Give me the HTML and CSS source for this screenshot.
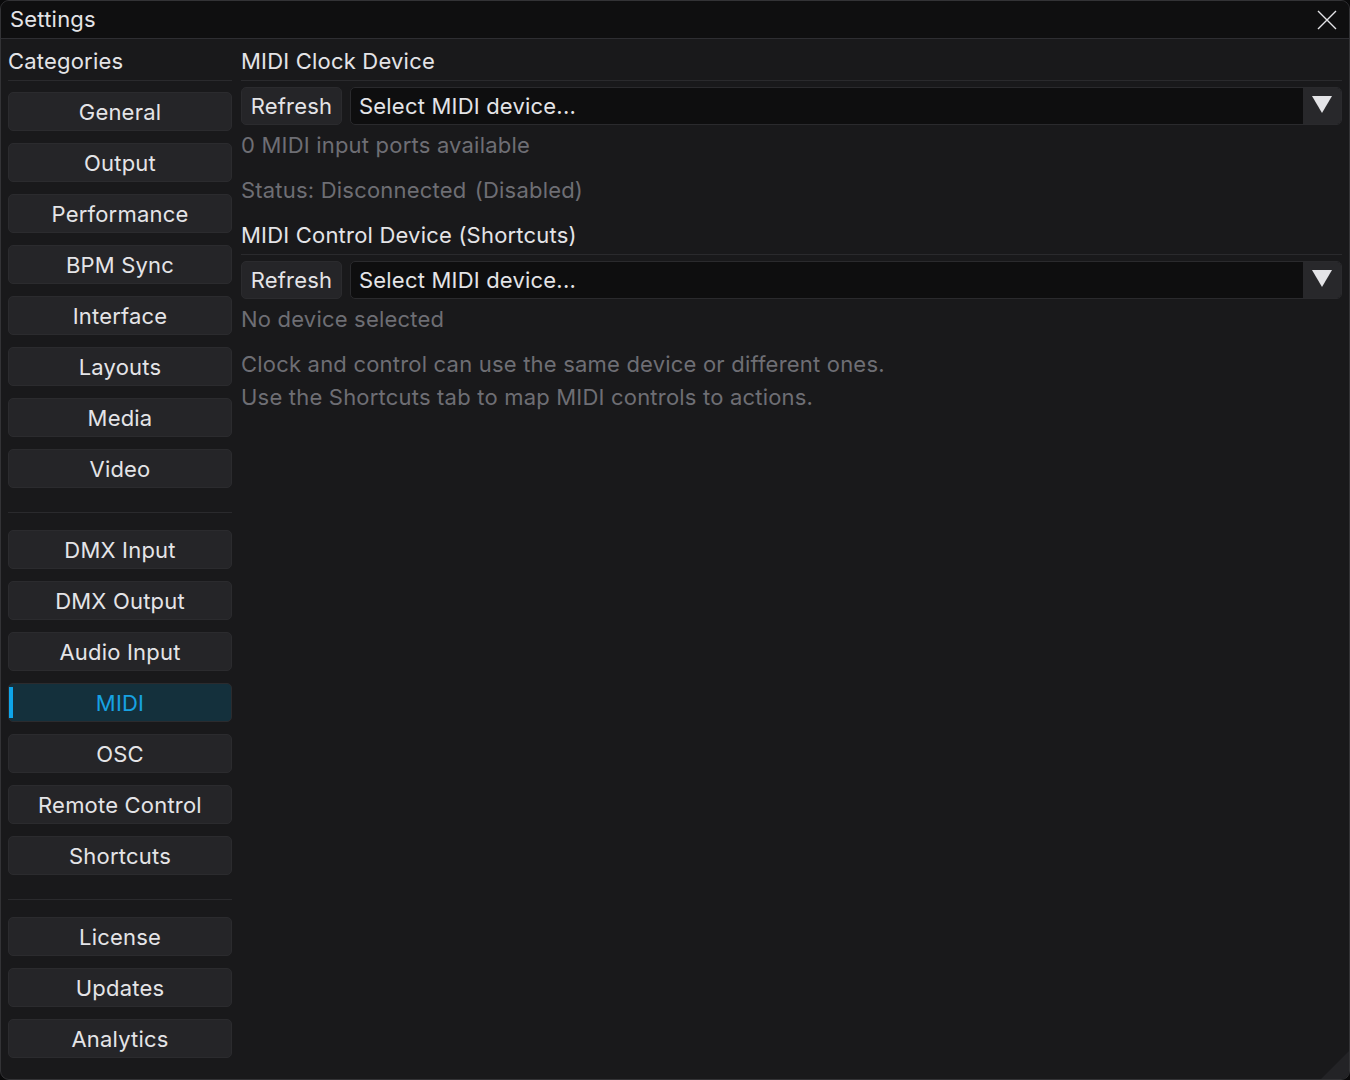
FILE: index.html
```html
<!DOCTYPE html>
<html>
<head>
<meta charset="utf-8">
<link rel="stylesheet" href="styles.css">
</head>
<body>
<div class="window">
  <div class="titlebar">
    <span class="title">Settings</span>
    <svg class="close" width="20" height="20" viewBox="0 0 20 20"><path d="M1 1 L19 19 M19 1 L1 19" stroke="#e4e4e7" stroke-width="1.4" fill="none"/></svg>
  </div>
  <div class="body">
    <div class="sidebar">
      <div class="header">Categories</div>
      <div class="cats">
        <div class="cat">General</div>
        <div class="cat">Output</div>
        <div class="cat">Performance</div>
        <div class="cat">BPM Sync</div>
        <div class="cat">Interface</div>
        <div class="cat">Layouts</div>
        <div class="cat">Media</div>
        <div class="cat">Video</div>
        <div class="sep"></div>
        <div class="cat">DMX Input</div>
        <div class="cat">DMX Output</div>
        <div class="cat">Audio Input</div>
        <div class="cat active">MIDI</div>
        <div class="cat">OSC</div>
        <div class="cat">Remote Control</div>
        <div class="cat">Shortcuts</div>
        <div class="sep"></div>
        <div class="cat">License</div>
        <div class="cat">Updates</div>
        <div class="cat">Analytics</div>
      </div>
    </div>
    <div class="main">
      <div class="header">MIDI Clock Device</div>
      <div class="row">
        <div class="btn">Refresh</div>
        <div class="combo"><span class="combo-text">Select MIDI device...</span><span class="arrow"><svg width="20" height="18" viewBox="0 0 20 18"><path d="M0 0 H20 L10 17 Z" fill="#e4e4e7"/></svg></span></div>
      </div>
      <div class="muted">0 MIDI input ports available</div>
      <div class="muted spaced">Status: Disconnected <span class="suffix">(Disabled)</span></div>
      <div class="header spaced">MIDI Control Device (Shortcuts)</div>
      <div class="row">
        <div class="btn">Refresh</div>
        <div class="combo"><span class="combo-text">Select MIDI device...</span><span class="arrow"><svg width="20" height="18" viewBox="0 0 20 18"><path d="M0 0 H20 L10 17 Z" fill="#e4e4e7"/></svg></span></div>
      </div>
      <div class="muted">No device selected</div>
      <div class="muted spaced">Clock and control can use the same device or different ones.</div>
      <div class="muted">Use the Shortcuts tab to map MIDI controls to actions.</div>
    </div>
  </div>
  <div class="grip"></div>
</div>
</body>
</html>
```

FILE: styles.css
```css
* { box-sizing: border-box; }
html, body {
  margin: 0;
  padding: 0;
  background: #0a0a0b;
}
body {
  font-family: Inter, "Noto Sans", sans-serif;
  font-size: 22px;
  letter-spacing: 0.2px;
  color: #e4e4e7;
}
.window {
  position: relative;
  width: 1350px;
  height: 1080px;
  border: 1px solid #333336;
  border-radius: 9px;
  background: #19191b;
  overflow: hidden;
  display: flex;
  flex-direction: column;
}
.titlebar {
  height: 38px;
  flex: none;
  background: #0f0f10;
  border-bottom: 1px solid #2e2e32;
  display: flex;
  align-items: center;
  justify-content: space-between;
  padding: 0 12px 0 9px;
}
.title {
  line-height: 25px;
}
.close { display: block; }
.body {
  flex: 1;
  display: flex;
  gap: 9px;
  padding: 10px 7px 0 7px;
}
.sidebar {
  width: 224px;
  flex: none;
}
.header {
  line-height: 25px;
  padding-bottom: 6px;
  border-bottom: 1px solid #2a2a2d;
}
.cats {
  display: flex;
  flex-direction: column;
  gap: 12px;
  margin-top: 11px;
}
.cat {
  height: 39px;
  background: #252528;
  border: 1px solid #2b2b2e;
  border-radius: 5px;
  display: flex;
  align-items: center;
  justify-content: center;
  position: relative;
}
.cat.active {
  background: #14303c;
  color: #17a2e2;
}
.cat.active::before {
  content: "";
  position: absolute;
  left: 0;
  top: 3px;
  bottom: 3px;
  width: 4px;
  background: #0ea5ea;
}
.sep {
  height: 1px;
  background: #2a2a2d;
  margin: 12px 0 5px;
}
.main {
  flex: 1;
  display: flex;
  flex-direction: column;
}
.row {
  display: flex;
  gap: 8px;
  margin-top: 6px;
  height: 38px;
}
.btn {
  width: 101px;
  background: #252528;
  border: 1px solid #2b2b2e;
  border-radius: 5px;
  display: flex;
  align-items: center;
  justify-content: center;
}
.combo {
  flex: 1;
  background: #0e0e0f;
  border: 1px solid #2a2a2d;
  border-radius: 5px;
  display: flex;
  align-items: center;
  overflow: hidden;
}
.combo-text {
  flex: 1;
  padding-left: 8px;
}
.arrow {
  width: 38px;
  height: 100%;
  background: #28282b;
  display: flex;
  align-items: center;
  justify-content: center;
}
.arrow svg { display: block; margin-top: -2px; }
.muted {
  color: #6e6e74;
  line-height: 25px;
  margin-top: 8px;
}
.suffix { margin-left: 2px; }
.spaced { margin-top: 20px; }
.header.spaced { margin-top: 20px; }
.grip {
  position: absolute;
  right: 0;
  bottom: 0;
  width: 0;
  height: 0;
  border-left: 28px solid transparent;
  border-bottom: 28px solid #232326;
}
```
